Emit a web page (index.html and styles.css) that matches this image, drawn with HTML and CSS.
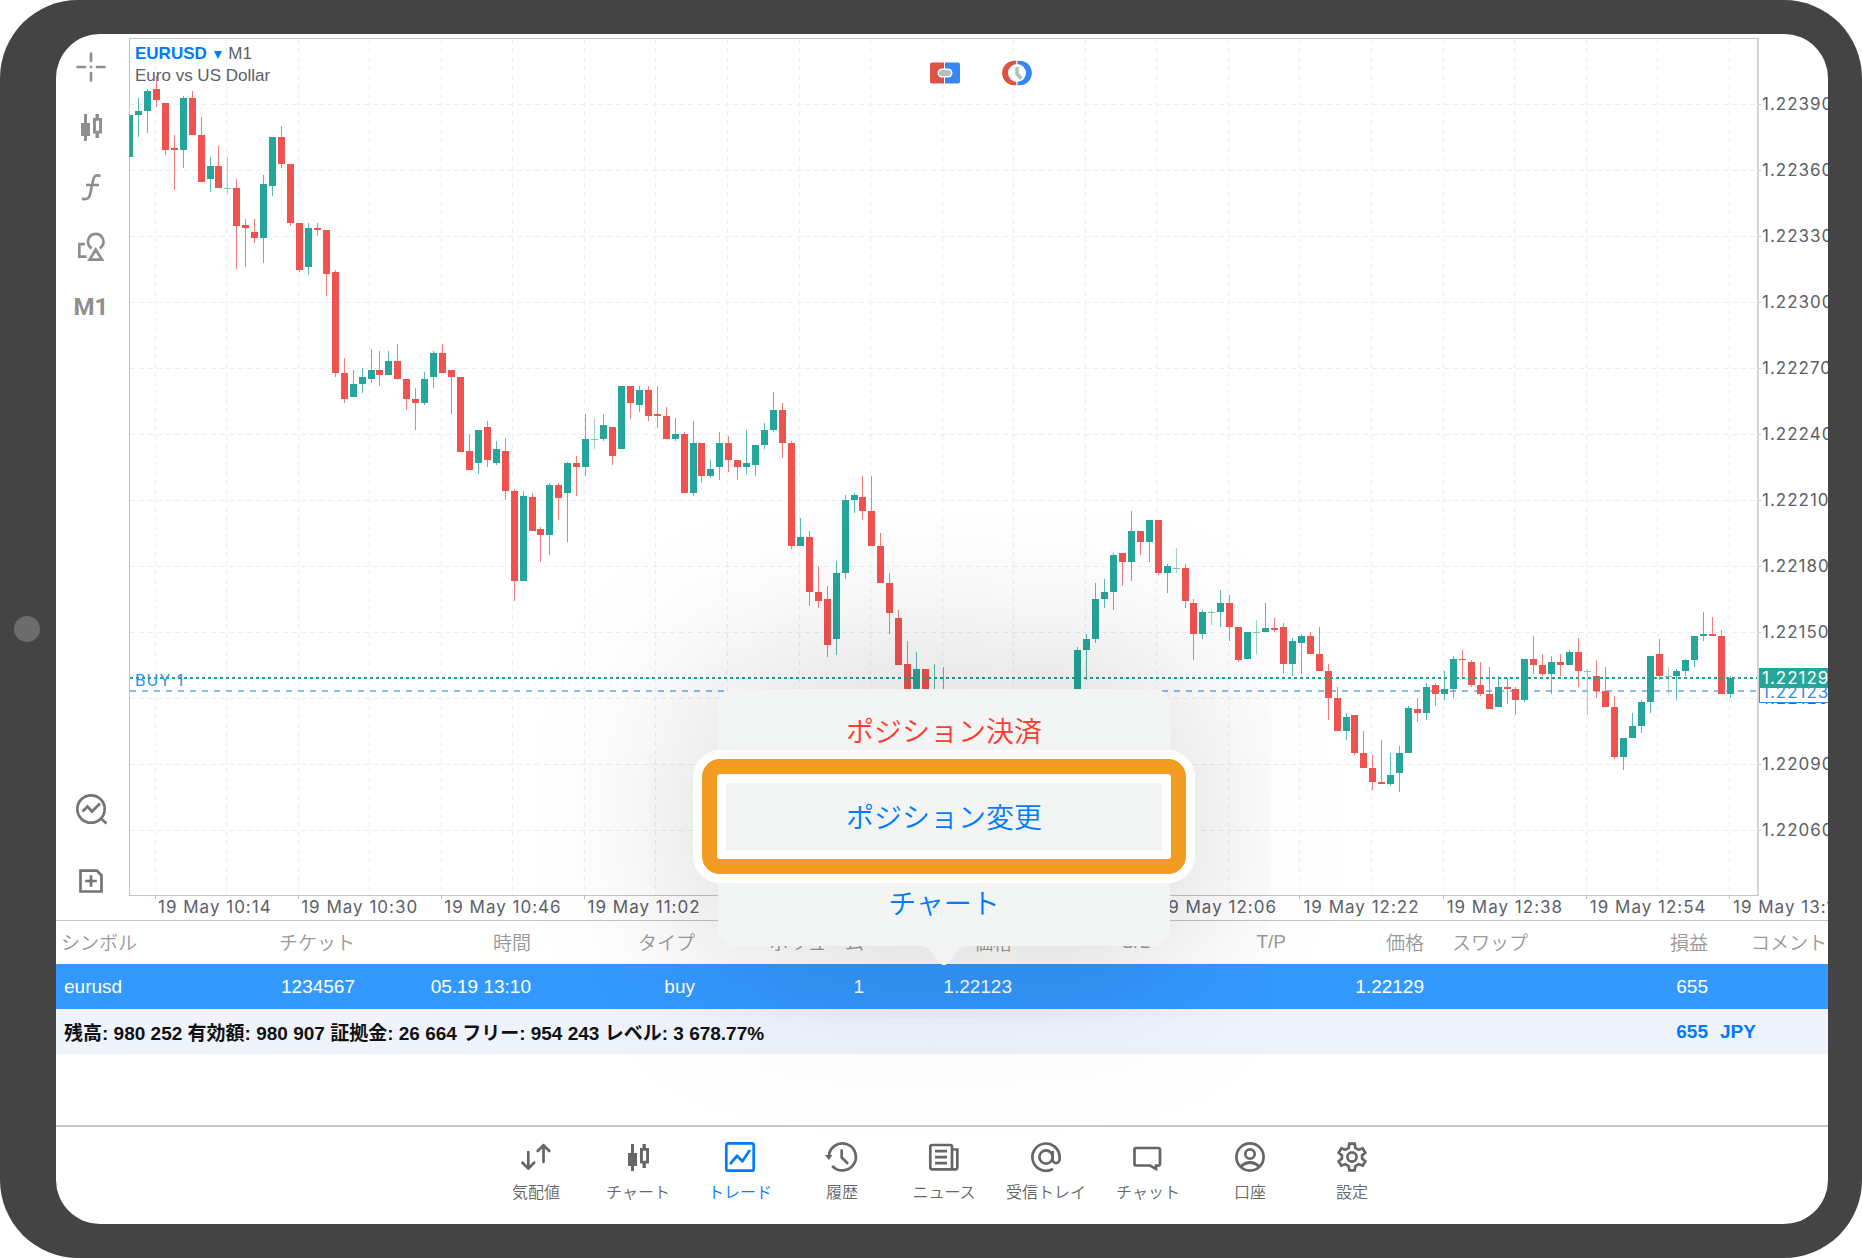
FILE: index.html
```html
<!DOCTYPE html>
<html lang="ja">
<head>
<meta charset="utf-8">
<meta name="viewport" content="width=device-width, initial-scale=1">
<title>EURUSD M1</title>
<link rel="stylesheet" href="styles.css">
</head>
<body>
<svg class="sprite" aria-hidden="true">
  <symbol id="i-candles" viewBox="0 0 32 32">
    <path class="solid" d="M6 12h3V3h3v9h3v13h-3v5H9v-5H6z"/>
    <path class="solid" fill-rule="evenodd" d="M18 7h2.500V3h3.400v4H27v15.500h-3.100V27h-3.400v-4.500H18zM20.900 9.800v9.900h3.200V9.800z"/>
  </symbol>
</svg>
<div class="device">
  <span class="camera"></span>
  <div class="screen">
    <main class="chart">
      <div class="toolbar">
        <div class="tools">
          <button class="tool" aria-label="十字線"><svg class="icon" viewBox="0 0 32 32"><path class="round" d="M16 2.500v7.500M16 22v7.500M2.500 16H10M22 16h7.500M15.900 16h.2"/></svg></button>
          <button class="tool" aria-label="チャート種類"><svg class="icon"><use href="#i-candles"/></svg></button>
          <button class="tool" aria-label="インディケータ"><svg class="icon" viewBox="0 0 32 32"><path d="M25.500 5C20.500 3 18.800 5.500 17.900 10L15.400 22C14.500 26.800 12.500 29.200 7 27.600M11 14h13"/></svg></button>
          <button class="tool" aria-label="オブジェクト"><svg class="icon" viewBox="0 0 32 32"><path d="M16.600 17.300A7.800 7.800 0 1 1 24.800 17.300M20.700 18.500l-6.100 10.200h12.400zM10 13.200H4.300v12.500h7.200"/></svg></button>
          <button class="tool timeframe">M1</button>
        </div>
        <div class="tools extra">
          <button class="tool" aria-label="銘柄検索"><svg class="icon" viewBox="0 0 32 32"><circle cx="16" cy="16" r="13.700"/><path d="M26 25.500l5.500 5M7.500 18.500l5-5 4.500 5 8-8"/></svg></button>
          <button class="tool" aria-label="新規注文"><svg class="icon" viewBox="0 0 32 32"><path d="M5.500 5.700h16.500l4.500 4.500v16.300h-21zM16 10.200v11.600M10.200 16h11.600"/></svg></button>
        </div>
      </div>
      <div class="plot">
        <svg class="candles" id="candles" viewBox="130 39 1627 856" preserveAspectRatio="none" aria-hidden="true"></svg>
        <div class="plot-head">
          <h1 class="symbol"><button class="symbol-pick">EURUSD <svg class="caret" viewBox="0 0 8 8"><path d="M0 0h8L4 8z"/></svg></button> M1<br>Euro vs US Dollar</h1>
          <div class="quick">
            <button class="quick-btn" aria-label="ワンクリック取引"><svg viewBox="0 0 32 26"><path fill="#db5345" d="M3 2.500h12v21H3a2 2 0 0 1-2-2v-17a2 2 0 0 1 2-2z"/><path fill="#3688ef" d="M16 2.500h13a2 2 0 0 1 2 2v17a2 2 0 0 1-2 2H16z"/><rect x="8.500" y="8.500" width="15" height="9" rx="4.500" fill="#fff"/><rect x="10" y="10" width="12" height="6" rx="3" fill="#afbec5"/></svg></button>
            <button class="quick-btn" aria-label="取引時間"><svg viewBox="0 0 32 26"><path fill="#db5345" d="M15.300.8h-2a12.200 12.200 0 0 0 0 24.400h2z"/><path fill="#3688ef" d="M16.500.8h2.200a12.200 12.200 0 0 1 0 24.400h-2.200z"/><circle cx="16" cy="13" r="9" fill="#fff"/><path fill="none" stroke="#afbec5" stroke-width="3.500" d="M16 7v7l4.500 4.500"/></svg></button>
          </div>
        </div>
        <span class="order-label">BUY 1</span>
      </div>
      <div class="prices">
        <ul class="price-list">
          <li>1.22390</li><li>1.22360</li><li>1.22330</li><li>1.22300</li><li>1.22270</li><li>1.22240</li>
          <li>1.22210</li><li>1.22180</li><li>1.22150</li><li>1.22120</li><li>1.22090</li><li>1.22060</li>
        </ul>
        <span class="tag tag-open">1.22123</span>
        <span class="tag tag-now">1.22129</span>
      </div>
      <ul class="times">
        <li>19 May 10:14</li><li>19 May 10:30</li><li>19 May 10:46</li><li>19 May 11:02</li><li>19 May 11:18</li><li>19 May 11:34</li>
        <li>19 May 11:50</li><li>19 May 12:06</li><li>19 May 12:22</li><li>19 May 12:38</li><li>19 May 12:54</li><li>19 May 13:10</li>
      </ul>
    </main>

    <section class="trades">
      <table class="positions">
        <colgroup>
          <col class="c-symbol"><col class="c-ticket"><col class="c-time"><col class="c-type"><col class="c-volume"><col class="c-open">
          <col class="c-sl"><col class="c-tp"><col class="c-price"><col class="c-swap"><col class="c-profit"><col class="c-comment">
        </colgroup>
        <thead>
          <tr><th class="first" scope="col">シンボル</th><th scope="col">チケット</th><th scope="col">時間</th><th scope="col">タイプ</th><th scope="col">ボリューム</th><th scope="col">価格</th><th scope="col">S/L</th><th scope="col">T/P</th><th scope="col">価格</th><th scope="col">スワップ</th><th scope="col">損益</th><th class="last" scope="col">コメント</th></tr>
        </thead>
        <tbody>
          <tr><td class="first">eurusd</td><td>1234567</td><td>05.19 13:10</td><td>buy</td><td>1</td><td>1.22123</td><td></td><td></td><td>1.22129</td><td></td><td>655</td><td></td></tr>
        </tbody>
        <tfoot>
          <tr><td class="first" colspan="10">残高: 980 252 有効額: 980 907 証拠金: 26 664 フリー: 954 243 レベル: 3 678.77%</td><td class="total">655</td><td class="total currency">JPY</td></tr>
        </tfoot>
      </table>
      <div class="popover">
        <button class="action danger">ポジション決済</button>
        <button class="action focused">ポジション変更</button>
        <button class="action">チャート</button>
        <svg class="arrow" viewBox="0 0 42 20" aria-hidden="true"><path d="M0 0c6 1 8 5 10 8l8 10q3 2.500 6 0l8-10c2-3 4-7 10-8z"/></svg>
      </div>
    </section>

    <nav class="tabs">
      <a class="tab" href="#quotes"><svg class="icon" viewBox="0 0 32 32"><path class="round" d="M8.300 11v16.500M2.500 21.800l5.800 5.800 5.800-5.800M23.500 21V4.200M17.700 10l5.800-5.800 5.800 5.800"/></svg>気配値</a>
      <a class="tab" href="#chart"><svg class="icon"><use href="#i-candles"/></svg>チャート</a>
      <a class="tab current" href="#trade"><svg class="icon" viewBox="0 0 32 32"><rect x="2.300" y="2.300" width="27.400" height="27.400" rx="2"/><path class="round" d="M6.700 22.300l6.200-7.500 5.500 5.500 7-10.500"/></svg>トレード</a>
      <a class="tab" href="#history"><svg class="icon" viewBox="0 0 32 32"><path d="M2.900 15.500A13.500 13.500 0 1 1 6.200 24.800M15.700 8.500v8l6.300 6.300"/><path class="solid" d="M-1 14h7.500l-3.700 5z"/></svg>履歴</a>
      <a class="tab" href="#news"><svg class="icon" viewBox="0 0 32 32"><path d="M24 28.300H4a1.700 1.700 0 0 1-1.700-1.700V5.700A1.700 1.700 0 0 1 4 4h18.300A1.700 1.700 0 0 1 24 5.700zM24 8.500h5.300v18a1.800 1.800 0 0 1-1.800 1.800H24M7 10.200h12M7 16.200h12M7 22.200h12"/></svg>ニュース</a>
      <a class="tab" href="#inbox"><svg class="icon" viewBox="0 0 32 32"><path d="M23 27.800A13.600 13.600 0 1 1 29.600 16v2c0 5.500-7 5.500-7 0v-8"/><circle cx="16" cy="16" r="6.600"/></svg>受信トレイ</a>
      <a class="tab" href="#chat"><svg class="icon" viewBox="0 0 32 32"><path d="M4 7h22.500a1.500 1.500 0 0 1 1.500 1.500v14.500a1.500 1.500 0 0 1-1.500 1.500h-2.500v3.500l-6-3.500H4A1.500 1.500 0 0 1 2.500 23V8.500A1.500 1.500 0 0 1 4 7z"/></svg>チャット</a>
      <a class="tab" href="#account"><svg class="icon" viewBox="0 0 32 32"><circle cx="16" cy="16" r="13.600"/><circle cx="16" cy="13" r="4.700"/><path d="M6.500 25.500q9.500-8 19 0"/></svg>口座</a>
      <a class="tab" href="#settings"><svg class="icon" viewBox="0 0 32 32"><path d="M13.400 2.700h5.200l.7 4.100 3.500 2 3.900-1.500 2.600 4.500-3.200 2.600v3.200l3.200 2.600-2.600 4.500-3.900-1.500-3.500 2-.7 4.100h-5.200l-.7-4.100-3.500-2-3.900 1.500-2.600-4.500 3.200-2.600v-3.200l-3.200-2.600 2.600-4.500 3.900 1.500 3.500-2z"/><circle cx="16" cy="16" r="4.600"/></svg>設定</a>
    </nav>
  </div>
</div>
<script src="chart.js"></script>
</body>
</html>
```
FILE: styles.css
```css
* { box-sizing: border-box; }

body {
  margin: 0;
  background: #fff;
  font-family: "Liberation Sans", "Noto Sans CJK JP", sans-serif;
  color: #5c6068;
}

ul { margin: 0; padding: 0; list-style: none; }

button {
  margin: 0;
  padding: 0;
  border: 0;
  background: none;
  color: inherit;
  font: inherit;
  cursor: pointer;
}

.sprite { position: absolute; width: 0; height: 0; }

.device {
  position: relative;
  display: flex;
  min-height: 100vh;
  padding: 34px 34px 34px 56px;
  border-radius: 78px;
  background: #444;
}

.camera {
  position: absolute;
  top: 50%;
  left: 14px;
  width: 26px;
  height: 26px;
  margin-top: -13px;
  border-radius: 50%;
  background: #6c6c6c;
}

.screen {
  display: flex;
  flex: 1;
  flex-direction: column;
  min-width: 0;
  overflow: hidden;
  border-radius: 44px;
  background: #fff;
}

/* icons */
.icon {
  width: 32px;
  height: 32px;
  overflow: visible;
  fill: none;
  stroke: currentColor;
  stroke-width: 2.7;
}
.icon .round { stroke-linecap: round; stroke-linejoin: round; }
.solid { fill: currentColor; stroke: none; }

/* chart */
.chart {
  display: grid;
  flex: 1;
  grid-template: minmax(500px, 1fr) 24px / 73px minmax(0, 1fr) 69px;
  padding-top: 4px;
}

.toolbar {
  display: flex;
  grid-row: 1 / 3;
  flex-direction: column;
  justify-content: space-between;
  padding: 0 3px 3px 0;
  color: #8e8e8e;
}
.tools { display: grid; grid-auto-rows: 60px; }
.extra { grid-auto-rows: 72px; color: #747474; }
.tool { display: grid; place-items: center; padding-bottom: 2px; }
.extra .tool { padding-bottom: 0; }
.timeframe { font: bold 24px Roboto, sans-serif; }

.plot {
  position: relative;
  display: grid;
  border: 1px solid #c4c4c4;
  border-right: 2px solid #d6d6d6;
}
.candles { grid-area: 1 / 1; width: 100%; height: 100%; min-height: 0; overflow: visible; }
.grid-line { stroke: #e8f0f4; stroke-dasharray: 5 4; }
.tick { stroke: #c4c4c4; }
.up { fill: #26a69a; }
.down { fill: #ef5350; }
.flat { fill: #7fc8a4; }
.wick { opacity: .75; }
.line-now { stroke: #26a08f; stroke-width: 2; stroke-dasharray: 3 3; }
.line-open { stroke: #86bcf9; stroke-width: 2; stroke-dasharray: 6 6; }

.plot-head {
  position: relative;
  display: grid;
  grid-area: 1 / 1;
  grid-template-columns: 1fr auto 1fr;
  align-items: start;
  align-self: start;
}
.symbol { margin: 4px 0 0 5px; font-size: 17px; font-weight: normal; line-height: 22px; }
.symbol-pick { color: #007aff; font-weight: bold; }
.caret { width: 8px; height: 8px; margin: 0 2px; fill: currentColor; }
.quick { display: flex; gap: 40px; padding: 21px 0 0 74px; }
.quick-btn { width: 32px; height: 26px; }
.quick-btn svg { display: block; }

.order-label,
.prices,
.times { font-family: Inter, sans-serif; font-size: 17px; line-height: 20px; letter-spacing: 1px; }

.order-label { position: absolute; top: 74%; left: 5px; margin-top: -2px; color: #2f8fef; font-size: 16px; }

.prices { position: relative; overflow: hidden; }
.price-list {
  display: grid;
  grid-template-rows: 1fr repeat(12, 2fr) 1fr;
  align-items: center;
  height: 100%;
  padding-left: 3px;
}
.price-list::before { content: ""; }
.tag {
  position: absolute;
  left: 0;
  width: 80px;
  padding-left: 2px;
  border: 1px solid #2f8fef;
  background: #fff;
  color: #2f8fef;
}
.tag-open { top: 75%; margin-top: -1px; }
.tag-now { top: 73%; margin-top: 4px; padding-left: 3px; border: 0; background: #26a69a; color: #fff; }

.times {
  display: grid;
  grid-column: 2 / 4;
  grid-template-columns: repeat(11, 1fr) 0;
  padding: 1px 95px 0 29px;
  overflow: hidden;
  white-space: nowrap;
}

/* open positions */
.trades { position: relative; min-height: 205px; border-top: 1px solid #c4c4c4; }

.positions { width: 100%; border-collapse: collapse; table-layout: fixed; }
.positions th, .positions td { padding: 0; text-align: right; white-space: nowrap; font-size: 19px; }
.positions th { height: 43px; padding-bottom: 2px; color: #999; font-weight: 350; }
.positions tbody { background: #39f; color: #fff; }
.positions tfoot { background: #eff4fc; color: #111; }
.positions tfoot td { font-weight: bold; }
.positions td { height: 45px; }
.positions .first { padding-left: 8px; text-align: left; }
.positions th.first { padding-left: 5px; }
.positions .last { padding-left: 43px; text-align: left; }
.positions .total { color: #007aff; }
.positions .currency { padding-left: 12px; text-align: left; }

.c-symbol { width: 124px; }
.c-ticket { width: 175px; }
.c-time { width: 176px; }
.c-type { width: 164px; }
.c-volume { width: 169px; }
.c-open { width: 148px; }
.c-sl { width: 138px; }
.c-tp { width: 136px; }
.c-price { width: 138px; }
.c-swap { width: 104px; }
.c-profit { width: 180px; }
.c-comment { width: 120px; }

/* position actions */
.popover {
  position: absolute;
  bottom: calc(100% - 25px);
  left: 50%;
  display: grid;
  grid-template-rows: repeat(3, 1fr);
  width: 452px;
  height: 257px;
  margin-left: -224px;
  border-radius: 16px;
  background: #f3f5f5;
  box-shadow: 0 0 190px rgba(0, 0, 0, .22);
}
.action {
  position: relative;
  padding-bottom: 3px;
  color: #007aff;
  font-family: "Noto Sans CJK JP", sans-serif;
  font-size: 28px;
  font-weight: 350;
  line-height: 36px;
}
.danger { color: #ff3b30; }
.focused::after {
  content: "";
  position: absolute;
  inset: -16px -16px -14px;
  border: 15px solid #f49b22;
  border-radius: 18px;
  box-shadow: 0 0 0 9px #fff, inset 0 0 0 9px #fff;
}
.arrow { position: absolute; top: 100%; left: 50%; width: 42px; height: 20px; margin-left: -21px; fill: #f3f5f5; }

/* bottom navigation */
.tabs {
  position: relative;
  display: flex;
  justify-content: center;
  height: 99px;
  padding: 14px 0 0 4px;
  border-top: 2px solid #c6c8c7;
}
.tab {
  display: flex;
  flex-direction: column;
  align-items: center;
  gap: 8px;
  width: 102px;
  color: #666;
  font-family: "Noto Sans CJK JP", sans-serif;
  font-size: 16px;
  font-weight: 350;
  line-height: 20px;
  text-decoration: none;
}
.current { color: #007aff; }
```
FILE: chart.js
```js
// Each candle: [high, body top, body bottom, low, kind], in plot units.
// kind: u = up, d = down, f = flat.
const series = [
  { start: 0, candles: [
    [115,115,157,157,'u'],[98,111,115,137,'u'],[89,91,111,133,'u'],[76,89,100,107,'d'],[103,103,150,155,'d'],
    [135,148,150,190,'d'],[96,98,150,168,'u'],[91,98,135,135,'d'],[117,135,182,182,'d'],[157,166,179,192,'u'],
    [146,166,188,188,'d'],[157,188,189,194,'f'],[179,188,226,269,'d'],[219,225,228,267,'d'],[219,232,238,243,'d'],
    [175,184,238,263,'u'],[137,137,186,196,'u'],[126,137,164,168,'d'],[164,164,223,226,'d'],[223,223,270,272,'d'],
    [223,228,267,275,'u'],[223,228,230,236,'d'],[230,230,274,296,'d'],[270,272,373,377,'d'],[358,373,399,403,'d'],
    [370,384,397,397,'u'],[368,377,384,393,'u'],[349,370,379,383,'u'],[351,370,375,386,'d'],[351,361,375,375,'u'],
    [344,361,379,379,'d'],[379,379,399,410,'d'],[388,399,403,430,'d'],[372,379,403,405,'u'],[351,353,377,388,'u'],
    [344,353,373,373,'d'],[370,370,377,414,'d'],[377,377,452,452,'d'],[434,451,470,470,'d'],[430,430,463,474,'u'],
    [421,427,460,467,'d'],[441,449,463,465,'u'],[438,451,491,500,'d'],[489,491,581,601,'d'],[491,496,581,581,'u'],
    [493,497,531,531,'d'],[527,529,535,562,'d'],[483,485,535,555,'u'],[483,485,498,520,'d'],[462,463,493,542,'u'],
    [456,463,467,496,'d'],[414,439,467,476,'u'],[418,439,440,449,'f'],[414,425,439,441,'u'],[427,427,456,465,'d'],
    [386,386,449,449,'u'],[386,386,403,419,'d'],[386,390,405,412,'u'],[386,390,416,421,'d'],[386,414,416,428,'d'],
    [407,416,439,439,'d'],[418,434,439,441,'u'],[432,434,493,493,'d'],[421,443,493,496,'u'],[443,443,476,483,'d'],
    [460,469,476,478,'u'],[432,443,467,480,'u'],[436,443,460,472,'d'],[460,460,467,480,'d'],[430,463,467,474,'u'],
    [445,445,465,476,'u'],[423,430,445,449,'u'],[392,410,430,432,'u'],[403,410,443,458,'d'],[441,443,546,549,'d'],
    [518,537,546,546,'u'],[531,537,592,606,'d'],[566,592,601,608,'d'],[586,599,645,657,'d'],[561,573,639,655,'u'],
    [495,500,573,579,'u'],[493,495,500,513,'u'],[476,497,511,520,'d'],[476,511,546,546,'d'],[533,546,583,583,'d'],
    [573,583,613,634,'d'],[610,618,665,665,'d'],[641,664,700,700,'d'],[652,669,700,700,'u'],[669,669,700,700,'d'],
    [664,695,700,700,'u'],[667,695,700,700,'d']
  ]},
  { start: 106, candles: [
    [647,650,700,700,'u'],[634,639,650,680,'u'],[583,599,639,643,'u'],[579,592,599,608,'u'],[553,555,592,610,'u'],
    [553,553,562,586,'d'],[511,531,562,581,'u'],[531,531,542,555,'d'],[520,520,542,562,'u'],[520,520,573,575,'d'],
    [564,566,573,593,'u'],[548,568,569,573,'f'],[564,568,601,608,'d'],[599,603,634,660,'d'],[610,612,634,639,'u'],
    [610,612,613,625,'f'],[590,603,612,627,'u'],[595,603,627,641,'d'],[627,627,660,662,'d'],[632,632,659,659,'u'],
    [620,632,633,654,'f'],[603,628,632,632,'u'],[618,628,630,632,'d'],[623,627,664,674,'d'],[638,641,664,676,'u'],
    [634,636,643,674,'u'],[632,636,654,654,'d'],[627,654,671,671,'d'],[664,671,698,720,'d'],[687,698,731,731,'d'],
    [713,717,731,740,'u'],[715,715,753,755,'d'],[731,753,768,768,'d'],[755,768,782,790,'d'],[740,782,784,784,'d'],
    [753,775,784,786,'u'],[746,753,773,792,'u'],[706,708,753,753,'u'],[698,709,713,722,'d'],[683,687,713,720,'u'],
    [683,685,694,706,'d'],[671,689,694,700,'u'],[656,659,689,698,'u'],[650,659,660,678,'d'],[660,662,685,687,'d'],
    [662,685,694,696,'d'],[667,694,709,709,'d'],[676,687,707,707,'u'],[678,687,689,704,'d'],[687,689,700,715,'d'],
    [659,659,700,702,'u'],[636,659,665,674,'d'],[654,665,674,676,'d'],[656,662,674,694,'u'],[654,662,665,676,'d'],
    [650,652,665,665,'u'],[638,652,671,687,'d'],[669,671,672,715,'f'],[660,676,691,698,'d'],[667,691,707,707,'d'],
    [696,707,757,759,'d'],[738,738,757,770,'u'],[713,726,738,738,'u'],[700,702,726,733,'u'],[656,656,702,713,'u'],
    [639,654,676,680,'d'],[667,676,677,694,'f'],[669,671,676,700,'u'],[659,660,671,676,'u'],[636,636,660,667,'u'],
    [612,634,636,641,'u'],[617,634,636,636,'d'],[630,636,694,694,'d'],[676,678,694,698,'u']
  ]}
];

const LEFT = 130, RIGHT = 1757, TOP = 39, BOTTOM = 895;
const STEP = 8.945;
const kinds = { u: 'up', d: 'down', f: 'flat' };
const out = [];
const line = (cls, x1, y1, x2, y2) =>
  out.push(`<line class="${cls}" x1="${x1}" y1="${y1}" x2="${x2}" y2="${y2}"/>`);
const rect = (cls, x, y, w, h) =>
  out.push(`<rect class="${cls}" x="${x}" y="${y}" width="${w}" height="${h}"/>`);

for (let i = 0; i < 12; i++) {
  const y = 104.5 + i * 66;
  line('grid-line', LEFT, y, RIGHT, y);
  line('tick', RIGHT + 2, y, RIGHT + 4, y);
}
for (let i = 0; i < 23; i++) {
  const x = Math.floor(155 + i * 71.56) + 0.5;
  line('grid-line', x, TOP, x, BOTTOM);
  if (i % 2 === 0) line('tick', x, BOTTOM + 1, x, BOTTOM + 4);
}
line('line-open', LEFT, 691, RIGHT, 691);

for (const { start, candles } of series) {
  candles.forEach(([high, top, bottom, low, kind], n) => {
    const x = Math.round(129.5 + (start + n) * STEP - 0.5);
    const cls = kinds[kind];
    rect(`${cls} wick`, x, high, 1, low - high);
    const left = Math.max(x - 3, LEFT);
    rect(cls, left, top, x + 4 - left, bottom - top);
  });
}
line('line-now', LEFT, 678, RIGHT, 678);

document.getElementById('candles').innerHTML = out.join('');
```
